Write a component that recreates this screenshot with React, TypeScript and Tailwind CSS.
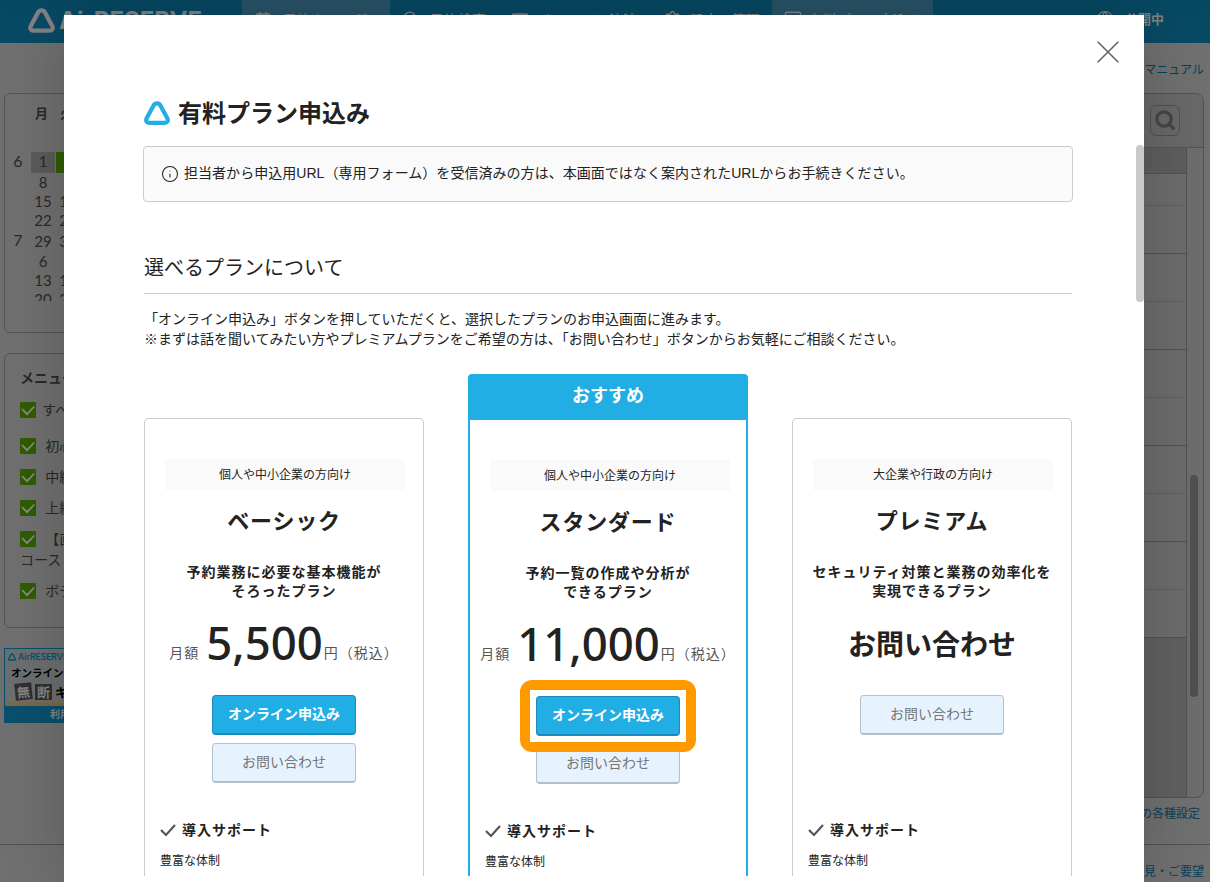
import React from "react";
import clsx from "clsx";
import { Calendar, Globe, Info, Mail, Monitor, Search, Settings } from "lucide-react";

interface Plan {
  name: string;
  target: string;
  lines: string[];
  price?: string;
  recommended?: boolean;
}

const plans: Plan[] = [
  {
    name: "ベーシック",
    target: "個人や中小企業の方向け",
    lines: ["予約業務に必要な基本機能が", "そろったプラン"],
    price: "5,500",
  },
  {
    name: "スタンダード",
    target: "個人や中小企業の方向け",
    lines: ["予約一覧の作成や分析が", "できるプラン"],
    price: "11,000",
    recommended: true,
  },
  {
    name: "プレミアム",
    target: "大企業や行政の方向け",
    lines: ["セキュリティ対策と業務の効率化を", "実現できるプラン"],
  },
];

const weeks = [
  { month: "6", days: ["1", "2"], height: "h-[21px]" },
  { month: "", days: ["8", "9"], height: "h-5" },
  { month: "", days: ["15", "16"], height: "h-[19px]" },
  { month: "", days: ["22", "23"], height: "h-[19px]" },
  { month: "7", days: ["29", "30"], height: "h-[22px]" },
  { month: "", days: ["6", "7"], height: "h-[19px]" },
  { month: "", days: ["13", "14"], height: "h-[19px]" },
  { month: "", days: ["20", "21"], height: "h-[19px]" },
];

const Triangle = ({ className }: { className: string }) => (
  <svg viewBox="0 0 26 24" fill="none" stroke="currentColor" className={className}>
    <path
      d="M9.6 4.4C11.2 1.6 14.8 1.6 16.4 4.4L23.2 17C24.6 19.8 23.4 21.8 20.6 21.8H5.4C2.6 21.8 1.4 19.8 2.8 17Z"
      strokeWidth="4.2"
      strokeLinejoin="round"
    />
  </svg>
);

const Header = () => (
  <header className="flex h-[43px] bg-linear-to-b from-[#064862] to-[#0a4a66] text-sm text-[#828282]">
    <div className="flex w-[242px] pl-7 pt-2">
      <Triangle className="h-[25px] w-[27px] shrink-0" />
      <span className="ml-1 font-['Inter',sans-serif] text-[24px] leading-[25px] font-bold">AirRESERVE</span>
    </div>
    <nav className="flex leading-[38px] whitespace-nowrap">
      <div className="flex w-[148px] bg-[#285267] pl-3">
        <Calendar className="mt-[11px] mr-[11px] size-[18px]" />
        予約カレンダー
      </div>
      <div className="flex w-[109px] pl-3">
        <Search className="mt-2.5 mr-[11px] size-[17px]" />
        予約検索
      </div>
      <div className="flex w-[153px] pl-3">
        <Mail className="mt-[11px] mr-[10px] size-[18px]" />
        オンライン決済
      </div>
      <div className="flex w-[120px] pl-3">
        <Settings className="mt-2.5 mr-[9px] size-[17px]" />
        設定・管理
      </div>
      <div className="flex w-[161px] bg-[#285267] pl-3">
        <Monitor className="mt-2.5 mr-[7px] size-[18px]" />
        有料プラン申込み
      </div>
    </nav>
    <div className="ml-auto flex pr-[46px] text-[13px] leading-[38px] font-bold">
      <Globe className="mt-2.5 mr-[11px] size-[18px]" strokeWidth={1.5} />
      公開中
    </div>
  </header>
);

const MenuItem = ({ label, className }: { label: string; className?: string }) => (
  <div className={clsx("flex h-4 items-center whitespace-nowrap", className)}>
    <span className="mr-1.5 flex size-4 shrink-0 items-center justify-center rounded-[1px] bg-[#2f5c00]">
      <svg viewBox="0 0 16 16" fill="none" stroke="#8a8a8a" strokeWidth="1.7" className="size-4">
        <path d="M2 7l5 5.2L14.3 4.5" />
      </svg>
    </span>
    <span className="pb-0.5">{label}</span>
  </div>
);

const Sidebar = () => (
  <aside className="w-[220px] pt-[50px] pl-1 text-[#292929]">
    <section className="h-60 rounded-md border border-[#555]">
      <div className="flex pt-[9px] pl-6 text-[13px] leading-5 font-bold">
        <span className="w-[25px] text-center">月</span>
        <span className="w-[25px] text-center">火</span>
      </div>
      <div className="mt-[29px] h-[149px] overflow-hidden font-['Lato',sans-serif] text-[15px]">
        {weeks.map((week, i) => (
          <div key={i} className={clsx("flex items-center", week.height)}>
            <span className="w-[26px] pb-1 text-center text-base">{week.month}</span>
            {week.days.map((day, j) => (
              <span
                key={day}
                className={clsx(
                  "mr-px flex h-full w-6 items-center justify-center pb-0.5 text-center",
                  i === 0 && j === 0 && "bg-[#5b5b5b]",
                  i === 0 && j === 1 && "bg-[#2f5c00] text-transparent"
                )}
              >
                {day}
              </span>
            ))}
          </div>
        ))}
      </div>
    </section>
    <section className="mt-5 h-[275px] rounded-md border border-[#555] pl-[15px] text-sm">
      <h2 className="mt-[13px] h-[21px] leading-5 font-bold">メニュー</h2>
      <MenuItem label="すべて選択" className="mt-3.5" />
      <MenuItem label=" 初心者コース" className="mt-5 whitespace-pre" />
      <MenuItem label=" 中級者コース" className="mt-[15px] whitespace-pre" />
      <MenuItem label=" 上級者コース" className="mt-[15px] whitespace-pre" />
      <MenuItem label=" 【直前予約】" className="mt-[15px] whitespace-pre" />
      <p className="mt-0.5 h-5 leading-5">コース</p>
      <MenuItem label=" ボディケア" className="mt-3.5 whitespace-pre" />
    </section>
    <section className="mt-5 h-[75px] w-[200px] overflow-hidden border border-[#0a4f6d] bg-[#6c6f70] whitespace-nowrap">
      <div className="flex h-4 items-center pl-[3px] font-['Inter',sans-serif] text-[8.5px] font-semibold text-[#0a4f6d]">
        <Triangle className="mr-0.5 size-2" />
        AirRESERVE
      </div>
      <div className="h-4 pl-1.5 text-[10.5px] leading-[15px] font-bold text-black">オンライン決済で</div>
      <div className="flex h-[25px] items-center gap-[3px] border-b-4 border-[#786a4a] pl-2.5 text-[13px] font-bold text-black">
        <span className="flex h-[17px] w-[17px] -rotate-6 items-center justify-center bg-[#303030] text-[#858585]">
          無
        </span>
        <span className="flex h-[16px] w-[17px] items-center justify-center bg-[#303030] text-[#858585]">断</span>
        キャンセル防止
      </div>
      <div className="h-4 bg-[#0a4f6d] pl-[45px] text-[10px] leading-4 font-bold text-[#858585]">利用を開始する</div>
    </section>
  </aside>
);

const Schedule = () => (
  <main className="flex w-[700px] flex-col items-end pt-4 pr-1.5 text-xs text-[#073f59]">
    <a className="leading-5">オンラインマニュアル</a>
    <section className="mt-3.5 h-[705px] w-full overflow-hidden rounded-tr-lg rounded-br-lg border border-[#525252] bg-[#6d6d6d]">
      <div className="flex h-[54px] justify-end border-b border-[#525252] bg-[#686868] pt-[11px] pr-[23px]">
        <button className="flex h-[31px] w-[30px] items-center justify-center rounded-md border border-[#505050]">
          <svg viewBox="0 0 21 21" fill="none" stroke="#464646" className="size-[21px]">
            <circle cx="9" cy="9" r="7.2" strokeWidth="3.2" />
            <path d="M14 14l5.2 5.2" strokeWidth="3.4" />
          </svg>
        </button>
      </div>
      <div className="flex h-full justify-end">
        <div className="h-full flex-1 border-r border-[#525252] bg-[#606060]">
          <div className="h-[26px] border-b border-[#525252] bg-[#5e5e5e]" />
          {["h-8", "h-12", "h-12", "h-12", "h-12", "h-12", "h-12", "h-12", "h-12", "h-12"].map((h, i) => (
            <div
              key={i}
              className={clsx(
                "border-b border-[#525252] bg-[#6c6c6c]",
                h,
                i % 2 === 0 ? "border-dotted" : "border-solid"
              )}
            />
          ))}
        </div>
        <div className="w-4 pt-[327px] pl-[3px]">
          <div className="h-[222px] w-2 rounded-full bg-[#505050]" />
        </div>
      </div>
    </section>
    <a className="mt-[5px] mr-1 leading-5">カレンダーの各種設定</a>
  </main>
);

const ContactButton = () => (
  <button className="block h-10 w-36 rounded border border-b-2 border-[#b3c0ca] bg-[#e6f3ff] pb-1 text-sm text-[#767676]">
    お問い合わせ
  </button>
);

const ApplyButton = ({ highlighted }: { highlighted?: boolean }) => (
  <div className="relative">
    <button className="block h-10 w-36 rounded border border-b-2 border-[#1a8ab8] bg-[#21aee5] pb-1 text-sm font-bold text-white">
      オンライン申込み
    </button>
    {highlighted && (
      <div className="absolute -inset-x-4 -top-4 h-[72px] rounded-xl border-10 border-[#ff9900]">
        <div className="h-full w-full shadow-[inset_0_0_0_6px_#fff]" />
      </div>
    )}
  </div>
);

const PlanCard = ({ plan }: { plan: Plan }) => (
  <article className={clsx("w-[280px]", !plan.recommended && "pt-11")}>
    {plan.recommended && (
      <div className="h-11 rounded-t bg-[#21aee5] text-center text-lg leading-[41px] font-bold text-white">おすすめ</div>
    )}
    <div
      className={clsx(
        "h-[700px] pt-10",
        plan.recommended ? "border-2 border-[#21aee5]" : "rounded border border-[#ccc]"
      )}
    >
      <p className="ml-5 h-[31px] w-60 bg-[#fafafa] text-center text-xs leading-[30px]">{plan.target}</p>
      <h3 className="h-[62px] text-center text-[22px] leading-[58px] font-bold tracking-[0.8px]">{plan.name}</h3>
      <p className="mt-2.5 h-[38px] text-center text-sm leading-[19px] font-bold tracking-[1px] whitespace-nowrap">
        {plan.lines[0]}
        <br />
        {plan.lines[1]}
      </p>
      {plan.price ? (
        <div className="flex h-[95px] items-start justify-center pt-[11px] text-sm leading-5 tracking-[1px] whitespace-nowrap text-[#555]">
          <span className="mt-[31px]">月額</span>
          <span className="ml-[7px] font-['Noto_Sans',sans-serif] text-[45.5px] leading-[62px] font-medium tracking-normal text-[#222]">
            {plan.price}
          </span>
          <span className="mt-[31px] ml-px">円（税込）</span>
        </div>
      ) : (
        <div className="h-[95px] text-center text-[28px] leading-[87px] font-bold">お問い合わせ</div>
      )}
      <div className="flex h-[115px] flex-col items-center gap-2">
        {plan.price && <ApplyButton highlighted={plan.recommended} />}
        <ContactButton />
      </div>
      <h4 className="flex h-10 items-center pl-[15px] text-sm font-bold tracking-[1px]">
        <svg viewBox="0 0 16 14" fill="none" stroke="#555" strokeWidth="2.2" className="mr-1.5 h-3.5 w-4">
          <path d="M1 7l5 5L15 2" />
        </svg>
        <span className="pb-0.5">導入サポート</span>
      </h4>
      <p className="pl-[15px] text-xs leading-5">豊富な体制</p>
    </div>
  </article>
);

const PlanModal = () => (
  <div className="absolute top-[15px] left-16 h-[867px] w-[1080px] bg-white text-[#222] shadow-[0_0_60px_rgba(0,0,0,0.2)]">
    <div className="h-[861px] overflow-hidden pt-[82px] pr-[72px] pl-20">
      <h1 className="flex h-8 items-center text-2xl font-bold">
        <Triangle className="mr-2 h-6 w-[26px] text-[#21aee5]" />
        <span className="pb-0.5">有料プラン申込み</span>
      </h1>
      <div className="-mr-px -ml-px mt-[17px] flex h-14 items-center rounded border border-[#ccc] bg-[#fafafa] pl-[17px] font-['Liberation_Sans','Noto_Sans_CJK_JP',sans-serif] text-sm tracking-[0.04px] whitespace-nowrap">
        <Info className="mr-[5px] size-[18px]" strokeWidth={1.4} />
        <span className="pb-0.5">
          担当者から申込用URL（専用フォーム）を受信済みの方は、本画面ではなく案内されたURLからお手続きください。
        </span>
      </div>
      <h2 className="mt-12 h-11 border-b border-[#ccc] text-xl leading-[33px]">選べるプランについて</h2>
      <p className="mt-3.5 h-[66px] text-sm leading-5 whitespace-nowrap">
        「オンライン申込み」ボタンを押していただくと、選択したプランのお申込画面に進みます。
        <br />
        ※まずは話を聞いてみたい方やプレミアムプランをご希望の方は、「お問い合わせ」ボタンからお気軽にご相談ください。
      </p>
      <div className="flex justify-between">
        {plans.map((plan) => (
          <PlanCard key={plan.name} plan={plan} />
        ))}
      </div>
    </div>
    <button aria-label="閉じる" className="absolute top-[26px] right-[25px]">
      <svg viewBox="0 0 22 22" stroke="#666" strokeWidth="1.6" className="size-[22px]">
        <path d="M.7 .7l20.6 20.6M21.3 .7L.7 21.3" />
      </svg>
    </button>
    <div className="absolute top-[130px] right-0 h-[157px] w-2 rounded-full bg-[#c9c9c9]" />
  </div>
);

const App = () => {
  return (
    <div className="relative h-[882px] w-[1210px] overflow-hidden bg-[#707070] font-['Noto_Sans_CJK_JP',sans-serif]">
      <Header />
      <div className="flex h-[802px] justify-between border-b border-[#505050]">
        <Sidebar />
        <Schedule />
      </div>
      <footer className="pt-4 pr-1.5 text-right text-xs leading-5 text-[#073f59]">ご意見・ご要望</footer>
      <PlanModal />
    </div>
  );
};

export default App;
